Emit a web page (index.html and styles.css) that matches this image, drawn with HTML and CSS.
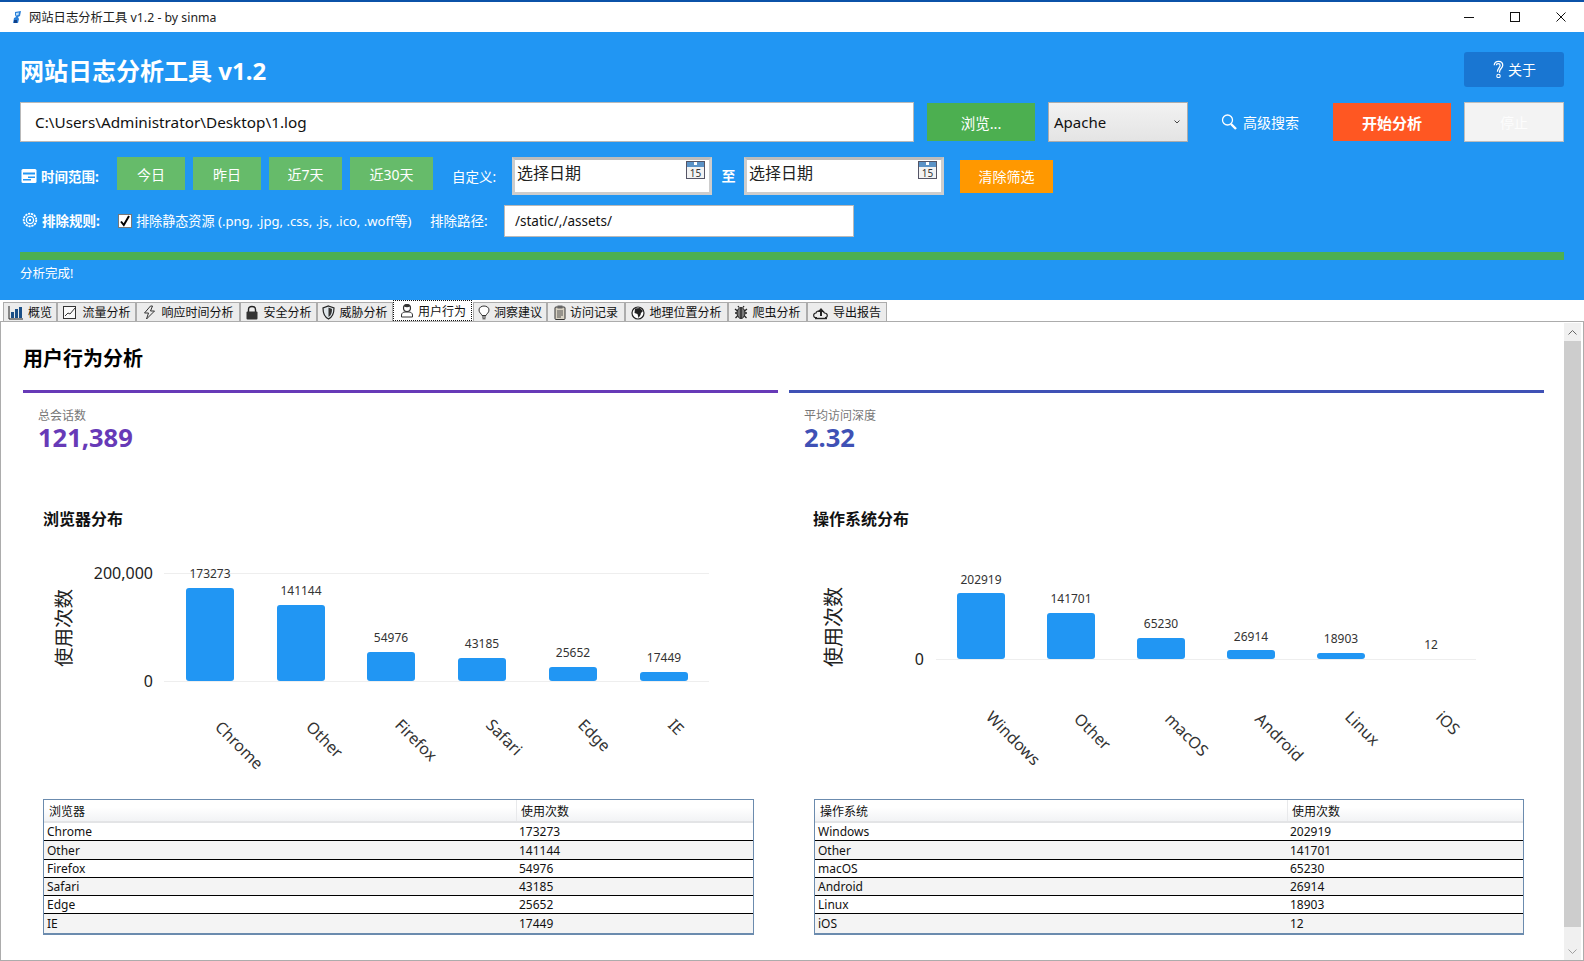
FILE: index.html
```html
<!DOCTYPE html>
<html lang="zh-CN">
<head>
<meta charset="utf-8">
<title>网站日志分析工具 v1.2 - by sinma</title>
<link rel="stylesheet" href="styles.css">
</head>
<body>
<div class="titlebar">
  <svg class="app-icon" width="10" height="13" viewBox="0 0 10 13"><path d="M3 1l6-1-1 5-2 1 1 2-1 4H1l1-5 2-1-1-2z" fill="#2a7fd8"/><path d="M4 2l3-.5-.5 2.500L4 4.500z" fill="#bfe0fa"/><path d="M2 9h3v3H2z" fill="#123f86"/></svg>
  <span class="app-name">网站日志分析工具 v1.2 - by sinma</span>
  <div class="win-ctrls">
    <span class="win-btn"><svg width="10" height="10" viewBox="0 0 10 10"><path d="M0 5.500h10" stroke="#111" fill="none"/></svg></span>
    <span class="win-btn"><svg width="10" height="10" viewBox="0 0 10 10"><rect x=".5" y=".5" width="9" height="9" stroke="#111" fill="none"/></svg></span>
    <span class="win-btn"><svg width="10" height="10" viewBox="0 0 10 10"><path d="M.5.500l9 9M9.500.500l-9 9" stroke="#111" fill="none"/></svg></span>
  </div>
</div>

<header class="header">
  <div class="row-title">
    <h1 class="app-title">网站日志分析工具 v1.2</h1>
    <button class="btn btn-about"><svg width="13" height="18" viewBox="0 0 12 17"><path d="M2 5c0-5 8-5 8 0 0 3-3 3-3 6v1M5 11c0-3 2.500-3.500 2.500-6C7.500 3 4 3 4 5" fill="none" stroke="#fff" stroke-width="1.200"/><ellipse cx="6" cy="15" rx="1.600" ry="1.600" fill="none" stroke="#fff"/></svg>关于</button>
  </div>
  <div class="row-file">
    <div class="field field-path">C:\Users\Administrator\Desktop\1.log</div>
    <button class="btn btn-browse">浏览...</button>
    <div class="combo">Apache<svg width="6" height="4" viewBox="0 0 6 4"><path d="M.5.500L3 3 5.500.500" fill="none" stroke="#444"/></svg></div>
    <div class="adv"><svg width="17" height="16" viewBox="0 0 17 16"><circle cx="6.500" cy="6" r="5" fill="none" stroke="#fff" stroke-width="1.300"/><path d="M10 10l5 5" stroke="#fff" stroke-width="2.400"/></svg>高级搜索</div>
    <button class="btn btn-start">开始分析</button>
    <button class="btn btn-stop">停止</button>
  </div>
  <div class="row-time">
    <div class="row-label"><svg width="16" height="16" viewBox="0 0 16 16"><rect x=".5" y="1" width="15" height="14" rx="1.500" fill="#fff"/><path d="M2 4.500h12v2H2zM7 8.500h7v1.500H7zM2 11h8v1.500H2z" fill="#2196F3"/></svg>时间范围:</div>
    <button class="btn btn-range b-w1">今日</button>
    <button class="btn btn-range b-w1">昨日</button>
    <button class="btn btn-range b-w2">近7天</button>
    <button class="btn btn-range b-w3">近30天</button>
    <span class="plain custom-label">自定义:</span>
    <div class="date">选择日期<svg class="cal" width="19" height="18" viewBox="0 0 19 18"><rect x=".5" y=".5" width="18" height="17" fill="#f3f3f3" stroke="#556"/><rect x="1" y="1" width="17" height="5" fill="#5b93c7"/><rect x="8" y="1" width="3" height="3" fill="#fff"/><text x="9.500" y="15.500" class="cal-num">15</text></svg></div>
    <span class="to">至</span>
    <div class="date">选择日期<svg class="cal" width="19" height="18" viewBox="0 0 19 18"><rect x=".5" y=".5" width="18" height="17" fill="#f3f3f3" stroke="#556"/><rect x="1" y="1" width="17" height="5" fill="#5b93c7"/><rect x="8" y="1" width="3" height="3" fill="#fff"/><text x="9.500" y="15.500" class="cal-num">15</text></svg></div>
    <button class="btn btn-clear">清除筛选</button>
  </div>
  <div class="row-exclude">
    <div class="row-label row-label-b"><svg width="16" height="16" viewBox="0 0 16 16"><circle cx="8" cy="8" r="6.300" fill="none" stroke="#fff" stroke-width="1.800" stroke-dasharray="2.200 .8"/><circle cx="8" cy="8" r="3.600" fill="none" stroke="#fff" stroke-width="1.300"/><circle cx="8" cy="8" r="1.200" fill="#fff"/></svg>排除规则:</div>
    <span class="check"><svg width="12" height="12" viewBox="0 0 12 12"><path d="M2 6.500l2.800 3.500L10 1" fill="none" stroke="#000" stroke-width="2"/></svg></span>
    <span class="plain check-text">排除静态资源 (.png, .jpg, .css, .js, .ico, .woff等)</span>
    <span class="plain path-label">排除路径:</span>
    <div class="field field-exclude">/static/,/assets/</div>
  </div>
  <div class="progress"></div>
  <div class="status">分析完成!</div>
</header>

<nav class="tabs">
  <div class="tab"><svg width="16" height="15" viewBox="0 0 16 15"><path d="M1 1v13h14" fill="none" stroke="#222"/><path d="M3 7h3v6H3zM7 4h3v9H7zM11 2h3v11h-3z" fill="#1b4f86"/></svg>概览</div>
  <div class="tab"><svg width="16" height="15" viewBox="0 0 16 15"><rect x="1.500" y="1.500" width="12" height="12" fill="#fafafa" stroke="#333"/><path d="M3 11l3-3 2 1 5-6" fill="none" stroke="#333"/></svg>流量分析</div>
  <div class="tab"><svg width="15" height="15" viewBox="0 0 14 15"><path d="M8 1L2 8h4l-2 6 8-8H8l2-5z" fill="none" stroke="#333"/></svg>响应时间分析</div>
  <div class="tab"><svg width="14" height="15" viewBox="0 0 14 15"><path d="M3.500 7V4.500C3.500.500 10.500.500 10.500 4.500V7" fill="none" stroke="#222" stroke-width="1.400"/><rect x="1.500" y="6.500" width="11" height="8" rx="1" fill="#333"/></svg>安全分析</div>
  <div class="tab"><svg width="13" height="15" viewBox="0 0 13 15"><path d="M6.500 1L12 3c0 6-1.500 9-5.500 11C2.500 12 1 9 1 3z" fill="#dfe6ea" stroke="#222" stroke-width="1.200"/><path d="M6.500 2.500L10 4c0 4-1 6.500-3.500 8z" fill="#333"/></svg>威胁分析</div>
  <div class="tab tab-active"><svg width="14" height="15" viewBox="0 0 14 15"><circle cx="7" cy="5" r="3.500" fill="none" stroke="#333" stroke-width="1.200"/><path d="M4 3.500c2 1 4 1 6 0l-1-2H5z" fill="#333"/><path d="M1.500 14v-2c0-2 2-3 3.500-3h4c1.500 0 3.500 1 3.500 3v2z" fill="none" stroke="#333"/></svg>用户行为</div>
  <div class="tab"><svg width="12" height="15" viewBox="0 0 12 15"><path d="M4 10.500C3.500 8.500 1 8 1 5c0-5.300 10-5.300 10 0 0 3-2.500 3.500-3 5.500z" fill="#fff" stroke="#333"/><path d="M4 12h4M4.500 13.800h3" stroke="#333"/></svg>洞察建议</div>
  <div class="tab"><svg width="12" height="15" viewBox="0 0 12 15"><rect x="1" y="2" width="10" height="12.500" rx="1" fill="#d8d2c4" stroke="#333"/><rect x="3.500" y=".5" width="5" height="3" fill="#666"/><path d="M3 6h6M3 8h6M3 10h6M3 12h4" stroke="#555"/></svg>访问记录</div>
  <div class="tab"><svg width="14" height="15" viewBox="0 0 14 15"><circle cx="7" cy="8" r="6" fill="#fff" stroke="#222" stroke-width="1.200"/><path d="M4 3.500l5-.5 3 3-2 2-.5 2-2 3-1-4-3-1z" fill="#222"/></svg>地理位置分析</div>
  <div class="tab"><svg width="14" height="15" viewBox="0 0 14 15"><ellipse cx="7" cy="8" rx="4" ry="5.500" fill="#777" stroke="#222"/><path d="M7 3v10M1 4l2.500 2M13 4l-2.500 2M1 8h2M13 8h-2M1.500 13l2-2M12.500 13l-2-2M5 2.500L4 1M9 2.500L10 1" stroke="#222" stroke-width="1.300"/></svg>爬虫分析</div>
  <div class="tab"><svg width="16" height="15" viewBox="0 0 16 15"><path d="M4 12.500H2.500C0 12.500 0 8 3 8c.5-3 7-3 8.500 0 3.500 0 3.500 4.500 1 4.500H12" fill="none" stroke="#222" stroke-width="1.200"/><path d="M8 3L4.500 7H7v4h2V7h2.500z" fill="#222"/><path d="M2 13.500h12" stroke="#222" stroke-width="1.400"/></svg>导出报告</div>
</nav>

<div class="panel">
  <main class="main">
    <h2 class="page-title">用户行为分析</h2>
    <section class="cols">
      <div class="card card-purple"><div class="card-label">总会话数</div><div class="card-value">121,389</div></div>
      <div class="card card-indigo"><div class="card-label">平均访问深度</div><div class="card-value">2.32</div></div>
    </section>
    <section class="cols">
      <div class="chart-col">
        <h3 class="chart-title">浏览器分布</h3>
        <svg class="chart" width="755" height="245" viewBox="23 540 755 245">
          <path d="M164 573.500H709M164 681.500H709" stroke="#eee"/>
          <g class="ax"><text x="153" y="579">200,000</text><text x="153" y="687">0</text></g>
          <text class="ax-title" transform="translate(71 628) rotate(-90)">使用次数</text>
          <g fill="#2196F3">
            <rect x="186" y="588" width="48" height="93" rx="3"/><rect x="277" y="605" width="48" height="76" rx="3"/><rect x="367" y="652" width="48" height="29" rx="3"/><rect x="458" y="658" width="48" height="23" rx="3"/><rect x="549" y="667" width="48" height="14" rx="3"/><rect x="640" y="672" width="48" height="9" rx="3"/>
          </g>
          <g class="val"><text x="210" y="578">173273</text><text x="301" y="595">141144</text><text x="391" y="642">54976</text><text x="482" y="648">43185</text><text x="573" y="657">25652</text><text x="664" y="662">17449</text></g>
          <g class="xl">
            <text transform="translate(214 728) rotate(45)">Chrome</text><text transform="translate(305 728) rotate(45)">Other</text><text transform="translate(394 726) rotate(45)">Firefox</text><text transform="translate(485 726) rotate(45)">Safari</text><text transform="translate(577 726) rotate(45)">Edge</text><text transform="translate(667 726) rotate(45)">IE</text>
          </g>
        </svg>
        <table class="grid">
          <thead><tr><th class="c1">浏览器</th><th>使用次数</th></tr></thead>
          <tbody>
            <tr><td>Chrome</td><td>173273</td></tr><tr><td>Other</td><td>141144</td></tr><tr><td>Firefox</td><td>54976</td></tr><tr><td>Safari</td><td>43185</td></tr><tr><td>Edge</td><td>25652</td></tr><tr><td>IE</td><td>17449</td></tr>
          </tbody>
        </table>
      </div>
      <div class="chart-col chart-col-b">
        <h3 class="chart-title">操作系统分布</h3>
        <svg class="chart" width="755" height="245" viewBox="789 540 755 245">
          <path d="M936 659.500H1476" stroke="#eee"/>
          <g class="ax"><text x="924" y="665">0</text></g>
          <text class="ax-title ax-title-b" transform="translate(841 627) rotate(-90)">使用次数</text>
          <g fill="#2196F3">
            <rect x="957" y="593" width="48" height="66" rx="3"/><rect x="1047" y="613" width="48" height="46" rx="3"/><rect x="1137" y="638" width="48" height="21" rx="3"/><rect x="1227" y="650" width="48" height="9" rx="3"/><rect x="1317" y="653" width="48" height="6" rx="3"/>
          </g>
          <g class="val"><text x="981" y="584">202919</text><text x="1071" y="603">141701</text><text x="1161" y="628">65230</text><text x="1251" y="641">26914</text><text x="1341" y="643">18903</text><text x="1431" y="649">12</text></g>
          <g class="xl">
            <text transform="translate(985 718) rotate(45)">Windows</text><text transform="translate(1073 720) rotate(45)">Other</text><text transform="translate(1164 720) rotate(45)">macOS</text><text transform="translate(1254 720) rotate(45)">Android</text><text transform="translate(1344 718) rotate(45)">Linux</text><text transform="translate(1435 718) rotate(45)">iOS</text>
          </g>
        </svg>
        <table class="grid">
          <thead><tr><th class="c1">操作系统</th><th>使用次数</th></tr></thead>
          <tbody>
            <tr><td>Windows</td><td>202919</td></tr><tr><td>Other</td><td>141701</td></tr><tr><td>macOS</td><td>65230</td></tr><tr><td>Android</td><td>26914</td></tr><tr><td>Linux</td><td>18903</td></tr><tr><td>iOS</td><td>12</td></tr>
          </tbody>
        </table>
      </div>
    </section>
  </main>
  <div class="scrollbar">
    <div class="sb-arrow"><svg width="9" height="5" viewBox="0 0 9 5"><path d="M.5 4.500l4-4 4 4" fill="none" stroke="#666"/></svg></div>
    <div class="sb-thumb"></div>
    <div class="sb-rest"><svg width="9" height="5" viewBox="0 0 9 5"><path d="M.5.500l4 4 4-4" fill="none" stroke="#a0a0a0"/></svg></div>
  </div>
</div>
</body>
</html>
```

FILE: styles.css
```css
* { box-sizing: border-box; }
html, body { margin: 0; padding: 0; }
body {
  width: 1584px;
  height: 961px;
  overflow: hidden;
  background: #fff;
  font-family: "Noto Sans", "Noto Sans CJK SC", sans-serif;
  color: #000;
}
h1, h2, h3 { margin: 0; }
button { font-family: inherit; padding: 0; border: 0; }

.titlebar {
  height: 32px;
  border-top: 2px solid #0b52a8;
  display: flex;
  align-items: center;
  padding-left: 12px;
  background: #fff;
}
.app-icon { flex: none; }
.app-name { margin-left: 7px; font-size: 12.300px; color: #222; }
.win-ctrls { margin-left: auto; display: flex; }
.win-btn { width: 46px; height: 30px; display: flex; align-items: center; justify-content: center; }

.header {
  height: 268px;
  padding: 20px 20px 0;
  background: #2196F3;
  color: #fff;
}
.row-title { height: 35px; display: flex; align-items: center; justify-content: space-between; }
.app-title { font-size: 24px; line-height: 35px; padding-top: 1px; font-weight: 700; }
.btn { color: #fff; display: flex; align-items: center; justify-content: center; font-size: 14px; }
.btn-about { width: 100px; height: 35px; padding-bottom: 2px; background: #1976D2; border-radius: 3px; gap: 3px; }

.row-file { margin-top: 15px; height: 40px; display: flex; align-items: center; }
.field {
  background: #fff;
  border: 1px solid #b9b9b9;
  color: #111;
  display: flex;
  align-items: center;
}
.field-path { width: 894px; height: 40px; padding-left: 14px; font-size: 15.300px; }
.btn-browse { width: 108px; height: 38px; margin-left: 13px; background: #4CAF50; font-size: 14.500px; }
.combo {
  width: 140px;
  height: 40px;
  margin-left: 13px;
  padding: 0 7px 0 5px;
  display: flex;
  align-items: center;
  justify-content: space-between;
  font-size: 15px;
  color: #111;
  background: linear-gradient(#f2f2f2, #e4e4e4);
  border: 1px solid #acacac;
}
.adv {
  width: 145px;
  padding-left: 33px;
  display: flex;
  align-items: center;
  gap: 5px;
  font-size: 14px;
}
.btn-start { width: 118px; height: 38px; background: #FF5722; font-weight: 700; font-size: 15px; }
.btn-stop { width: 100px; height: 40px; margin-left: 13px; background: #f3f3f3; border: 1px solid #bdbdbd; color: #fdfdfd; }

.row-time { margin-top: 15px; height: 38px; display: flex; align-items: flex-start; }
.row-label {
  width: 97px;
  height: 33px;
  margin-top: 2px;
  padding-left: 1px;
  display: flex;
  align-items: center;
  gap: 4px;
  font-size: 13.500px;
  font-weight: 700;
  white-space: nowrap;
}
.plain { font-size: 13.500px; white-space: nowrap; }
.btn-range { height: 33px; padding-top: 1px; margin-right: 8px; background: #66BB6A; }
.b-w1 { width: 68px; }
.b-w2 { width: 73px; }
.b-w3 { width: 83px; margin-right: 0; }
.custom-label { width: 45px; margin: 9px 15px 0 19px; }
.date {
  position: relative;
  width: 200px;
  height: 38px;
  padding: 1px 0 0 2px;
  background: #fff;
  border: 3px solid #cdcdcd;
  border-top-color: #bcbcbc;
  color: #222;
  font-size: 16px;
  line-height: 24px;
}
.cal { position: absolute; top: 1px; right: 4px; }
.cal-num { font-size: 10px; text-anchor: middle; fill: #333; font-family: "Noto Sans", sans-serif; }
.to { width: 32px; margin-top: 8px; padding-left: 1px; text-align: center; font-size: 14px; font-weight: 700; }
.btn-clear { width: 93px; height: 33px; padding-bottom: 1px; margin: 3px 0 0 16px; background: #FF9800; }

.row-exclude { margin-top: 10px; height: 32px; display: flex; align-items: center; }
.row-label-b { width: 98px; height: 30px; margin: 0 0 2px; padding-left: 2px; }
.check { width: 14px; height: 14px; flex: none; background: #fff; border: 1px solid #777; display: flex; align-items: center; justify-content: center; }
.check-text { width: 277px; margin: 0 0 2px 4px; font-size: 13.100px; }
.path-label { width: 57px; margin: 0 0 2px 17px; }
.field-exclude { width: 350px; height: 32px; margin-left: 17px; padding-left: 10px; font-size: 13.500px; }

.progress { margin-top: 15px; height: 8px; background: #4CAF50; }
.status { margin-top: 5px; font-size: 12.500px; line-height: 18px; }

.tabs {
  height: 21px;
  padding-left: 3px;
  display: grid;
  grid-template-columns: 54px 79px 104px 77px 76px 80px 74px 78px 103px 79px 80px;
  align-items: end;
  background: #fff;
}
.tab {
  height: 19px;
  padding-left: 1px;
  display: flex;
  align-items: center;
  justify-content: center;
  gap: 4px;
  background: #ececec;
  border: 1px solid #acacac;
  border-bottom-width: 0;
  border-left-width: 0;
  box-shadow: inset 1px 0 0 #acacac;
  font-size: 12px;
  color: #111;
  white-space: nowrap;
}
.tab svg { flex: none; }
.tab-active {
  height: 21px;
  margin-right: 1px;
  background: #fff;
  border: 1px dotted #111;
  box-shadow: none;
}

.panel {
  height: 640px;
  display: flex;
  border: 1px solid #acacac;
  background: #fff;
  overflow: hidden;
}
.main { width: 1563px; padding: 23px 0 0 22px; overflow: hidden; }
.page-title { font-size: 20px; line-height: 28px; font-weight: 700; }
.cols { display: grid; grid-template-columns: 755px 755px; column-gap: 11px; }
.card { margin-top: 17px; height: 61px; border-top: 3px solid; padding: 15px 0 0 15px; }
.card-purple { border-color: #673AB7; color: #673AB7; }
.card-indigo { border-color: #3F51B5; color: #3F51B5; }
.card-label { font-size: 12px; line-height: 15px; color: #777; }
.card-value { font-size: 25.500px; line-height: 28px; font-weight: 700; }

.chart-col { padding-top: 57px; }
.chart-title { padding-left: 20px; font-size: 16px; line-height: 22px; font-weight: 700; color: #111; }
.chart-col-b .chart-title { padding-left: 24px; }
.chart { display: block; margin-top: 10px; }
.ax text { font-size: 16px; text-anchor: end; fill: #222; }
.ax-title { font-size: 19.500px; text-anchor: middle; fill: #222; }
.ax-title-b { font-size: 20px; }
.val text { font-size: 12px; text-anchor: middle; fill: #333; }
.xl text { font-size: 16px; fill: #333; }

.grid {
  width: 711px;
  margin: 14px 0 0 20px;
  table-layout: fixed;
  border-collapse: separate;
  border-spacing: 0;
  border: 1px solid #6b8bae;
  border-bottom-width: 2px;
  font-size: 12px;
  color: #111;
}
.chart-col-b .grid { width: 710px; margin-left: 25px; }
.grid th {
  height: 23px;
  padding: 0 0 0 5px;
  text-align: left;
  font-weight: 400;
  background: linear-gradient(#fff 35%, #f2f3f5);
  border-bottom: 2px solid #e3e4e6;
  box-shadow: inset 1px 0 0 #e8e9eb;
}
.grid th.c1 { width: 472px; box-shadow: none; }
.grid td {
  height: 18px;
  padding: 0 0 0 3px;
  line-height: 16px;
  border-bottom: 1px solid #000;
}
.grid tr:nth-child(2) td { height: 19px; padding-top: 1px; }
.grid tr:nth-child(even) td { background: #f4f4f4; }
.grid tr:last-child td { height: 19px; border-bottom: 0; }

.scrollbar { width: 17px; margin-top: 1px; display: flex; flex-direction: column; background: #f0f0f0; }
.sb-arrow { height: 18px; display: flex; align-items: center; justify-content: center; }
.sb-thumb { height: 586px; background: #cdcdcd; }
.sb-rest { flex: 1; display: flex; align-items: flex-end; justify-content: center; padding-bottom: 6px; }
```
